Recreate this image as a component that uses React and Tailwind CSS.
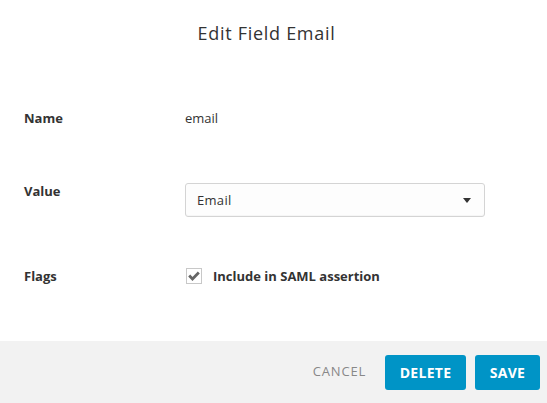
import React from 'react';

const Row = ({ label, children, className = '' }) => (
    <div className={`flex items-start text-[13px] leading-5 ${className}`}>
        <div className="w-[161px] shrink-0 font-bold text-[#333]">{label}</div>
        <div className="flex-1">{children}</div>
    </div>
);

const App = () => {
    return (
        <div className="w-[547px] h-[403px] flex flex-col bg-white text-[#333] font-['Open_Sans',_'Noto_Sans',_sans-serif]">
            <div className="h-[66px] flex items-center justify-center pr-[14px] text-[18px] leading-6 tracking-[0.7px] text-[#333]">
                Edit Field Email
            </div>

            <div className="flex-1 px-6">
                <Row label="Name" className="mt-[42px]">
                    <span className="text-[#333]">email</span>
                </Row>

                <Row label="Value" className="mt-[53px]">
                    <div className="mt-[2px] w-[300px] h-[34px] flex items-center justify-between pl-[11px] pr-[13px] border border-[#d4d4d4] rounded-[3px] bg-[#fdfdfd] shadow-[inset_0_-1px_1px_rgba(0,0,0,0.03)]">
                        <span className="text-[#333] tracking-[0.3px]">Email</span>
                        <svg width="8" height="5" viewBox="0 0 8 5">
                            <path d="M0 0h8L4 5z" fill="#333" />
                        </svg>
                    </div>
                </Row>

                <Row label="Flags" className="mt-[49px]">
                    <label className="flex items-center gap-[11px] h-5">
                        <span className="w-4 h-4 ml-[1px] border border-[#c8c8c8] bg-white flex items-center justify-center">
                            <svg width="12" height="10" viewBox="0 0 12 10">
                                <path d="M1.2 4.6l3.3 3.4L10.8 1.6" fill="none" stroke="#666" strokeWidth="2.8" />
                            </svg>
                        </span>
                        <span className="font-bold text-[#333]">Include in SAML assertion</span>
                    </label>
                </Row>
            </div>

            <div className="h-[62px] bg-[#f2f2f2] flex items-center justify-end pr-[7px]">
                <button className="text-[13px] text-[#888] uppercase tracking-[0.8px] mr-[19px]">Cancel</button>
                <button className="w-[81px] h-[35px] rounded-[3px] bg-[#0094c6] text-white text-[14px] font-bold uppercase tracking-[0.3px] mr-[9px]">Delete</button>
                <button className="w-[65px] h-[35px] rounded-[3px] bg-[#0094c6] text-white text-[14px] font-bold uppercase tracking-[0.3px]">Save</button>
            </div>
        </div>
    );
};

export default App;
